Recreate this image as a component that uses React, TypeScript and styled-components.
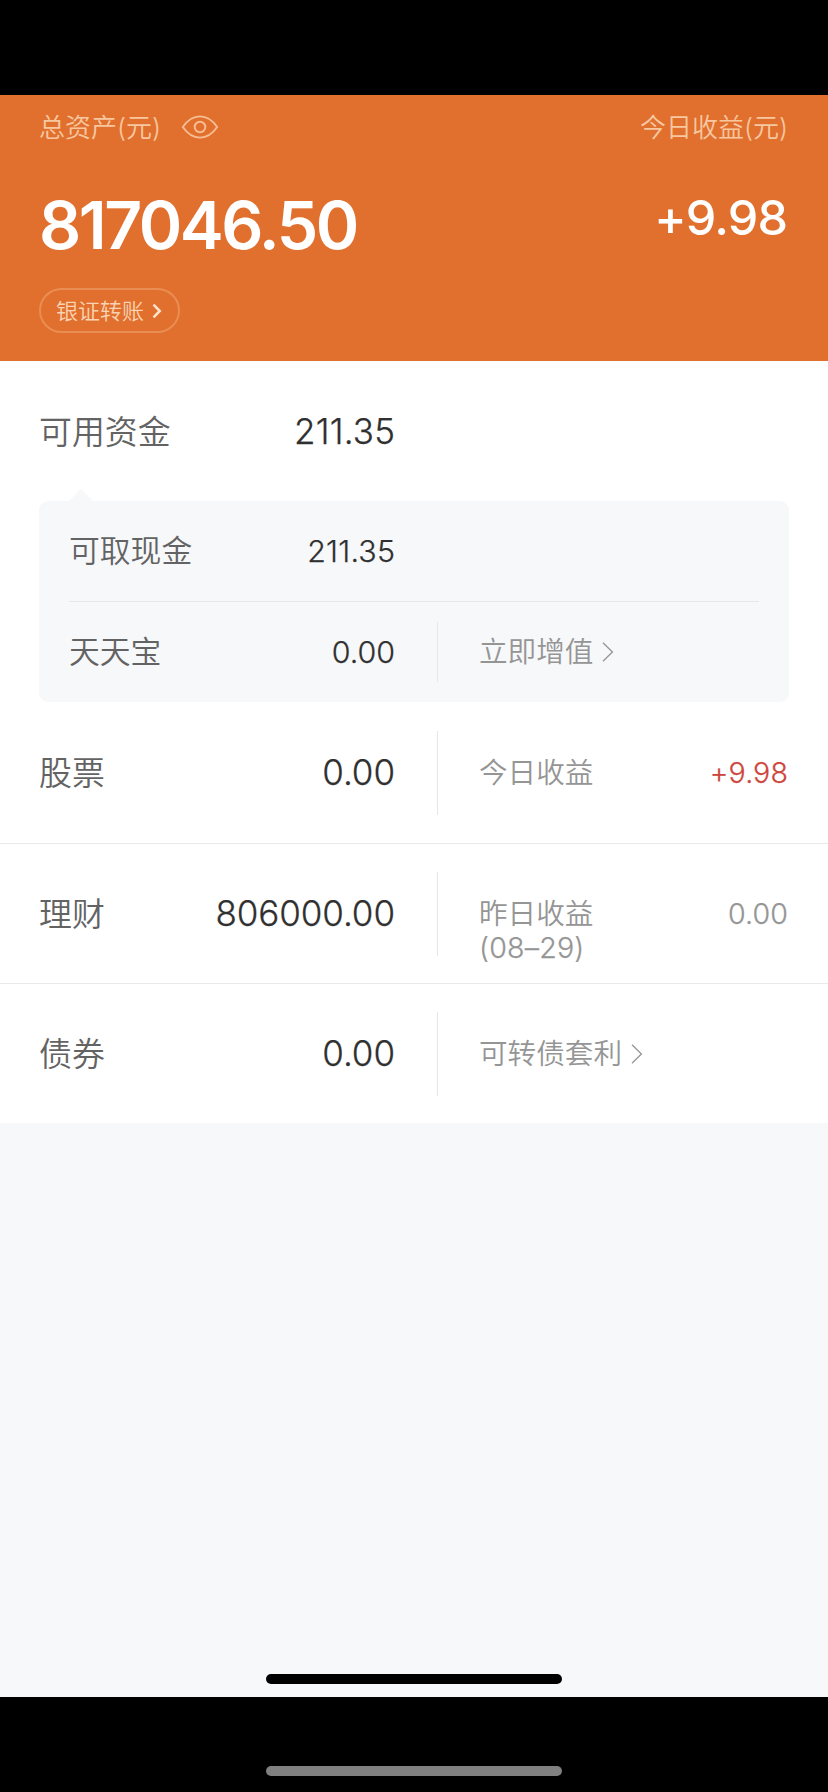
import React from "react";
import styled, { createGlobalStyle } from "styled-components";

const GlobalStyle = createGlobalStyle`
  * { box-sizing: border-box; }
  html, body { margin: 0; padding: 0; background: #000; }
  body {
    font-family: Inter, "Noto Sans CJK SC", sans-serif;
    font-weight: 400;
    font-feature-settings: "calt" 0;
  }
`;

const Screen = styled.div`
  width: 828px;
  height: 1792px;
  padding-top: 95px;
  background: #000;
  display: flex;
  flex-direction: column;
  overflow: hidden;
`;

const Page = styled.main`
  height: 1602px;
  background: #f7f8fa;
  display: flex;
  flex-direction: column;
`;

const Summary = styled.header`
  height: 266px;
  flex: none;
  padding: 13px 40px 0 39px;
  background: #e1702e;
  color: #fff;
  display: flex;
  justify-content: space-between;
`;

const SummaryColumn = styled.div<{ $end?: boolean }>`
  display: flex;
  flex-direction: column;
  align-items: ${(p) => (p.$end ? "flex-end" : "flex-start")};
`;

const Caption = styled.div`
  height: 40px;
  display: flex;
  align-items: center;
  gap: 20px;
  font-size: 26px;
  font-weight: 350;
  line-height: 40px;
  color: #f7c7a0;
  white-space: nowrap;
`;

const Figure = styled.div<{ $size: number; $top: number; $spacing: number; $weight: number }>`
  height: 80px;
  margin-top: ${(p) => p.$top}px;
  font-size: ${(p) => p.$size}px;
  font-weight: ${(p) => p.$weight};
  letter-spacing: ${(p) => p.$spacing}px;
  margin-right: ${(p) => -p.$spacing}px;
  line-height: 80px;
  white-space: nowrap;
`;

const TransferButton = styled.button`
  width: 141px;
  height: 45px;
  margin: 23px 0 0;
  padding: 0 16px 0 15px;
  border: 2px solid #ea8d53;
  border-radius: 23px;
  background: transparent;
  color: #fad3b3;
  font: inherit;
  font-size: 22px;
  font-weight: 350;
  line-height: 40px;
  display: flex;
  align-items: center;
  justify-content: space-between;
  white-space: nowrap;
`;

const Funds = styled.section`
  background: #fff;
  display: flex;
  flex-direction: column;
`;

const Row = styled.div<{ $height: number; $line?: boolean }>`
  height: ${(p) => p.$height}px;
  padding: 0 40px 0 39px;
  display: flex;
  align-items: center;
  border-bottom: ${(p) => (p.$line ? "1px solid #e9e9eb" : "none")};
`;

const Label = styled.div<{ $inset?: boolean }>`
  flex: 1;
  padding-top: ${(p) => (p.$inset ? 0 : 1)}px;
  font-size: ${(p) => (p.$inset ? 30.8 : 32.9)}px;
  line-height: 44px;
  font-weight: 350;
  color: #636363;
  white-space: nowrap;
`;

const Holding = styled.div<{ $inset?: boolean }>`
  width: ${(p) => (p.$inset ? 326 : 356)}px;
  flex: none;
  display: flex;
  align-items: center;
`;

const Amount = styled.div<{ $inset?: boolean; $spacing?: number }>`
  padding-bottom: 1px;
  font-size: ${(p) => (p.$inset ? 30.4 : 35)}px;
  font-weight: 350;
  letter-spacing: ${(p) => p.$spacing ?? 0}px;
  margin-right: ${(p) => -(p.$spacing ?? 0)}px;
  line-height: 44px;
  color: #303030;
  -webkit-text-stroke: 0.25px #303030;
`;

const Separator = styled.div<{ $height: number }>`
  width: 1px;
  height: ${(p) => p.$height}px;
  flex: none;
  margin: 0 41px 0 42px;
  background: #e6e7e9;
`;

const Detail = styled.div<{ $inset?: boolean }>`
  flex: 1;
  height: ${(p) => (p.$inset ? 34 : 35)}px;
  display: flex;
  justify-content: space-between;
  font-size: 28.6px;
  font-weight: 350;
  line-height: 36px;
  color: #959595;
  white-space: nowrap;
`;

const DetailLink = styled.div`
  display: flex;
  align-items: center;
  gap: 9px;
`;

const Change = styled.div<{ $up?: boolean }>`
  letter-spacing: 0.1px;
  color: ${(p) => (p.$up ? "#cd463c" : "#959595")};
  -webkit-text-stroke: 0.25px currentColor;
`;

const DateText = styled.div`
  line-height: 32px;
  letter-spacing: 0.2px;
  -webkit-text-stroke: 0.25px currentColor;
`;

const Breakdown = styled.div`
  position: relative;
  height: 201px;
  margin: 0 39px;
  padding: 0 30px;
  border-radius: 9px;
  background: #f7f8fa;
`;

const Pointer = styled.svg`
  position: absolute;
  left: 30px;
  top: -12px;
`;

const InsetRow = styled.div<{ $line?: boolean }>`
  height: ${(p) => (p.$line ? 101 : 100)}px;
  display: flex;
  align-items: center;
  border-bottom: ${(p) => (p.$line ? "1px solid #e6e7ea" : "none")};
`;

const HomeBar = styled.div<{ $tone: string; $top: string }>`
  width: 296px;
  height: 10px;
  flex: none;
  border-radius: 5px;
  margin: ${(p) => p.$top} auto 0;
  background: ${(p) => p.$tone};
`;

const EyeDrawing = styled.svg`
  margin-bottom: 2px;
`;

const EyeIcon = () => (
  <EyeDrawing width="38" height="26" viewBox="0 0 38 26" fill="none" stroke="#f6bd92" strokeWidth="1.9">
    <path d="M1.8 13C6.5 6.2 12 2.4 19 2.4S31.5 6.2 36.2 13C31.5 19.8 26 23.6 19 23.6S6.5 19.8 1.8 13Z" strokeLinejoin="round" />
    <circle cx="19" cy="13" r="5.3" />
  </EyeDrawing>
);

const BoldChevron = () => (
  <svg width="10" height="16" viewBox="0 0 10 16" fill="none" stroke="#fde3cd" strokeWidth="2.5">
    <path d="M1.5 1.6L7.8 8L1.5 14.4" />
  </svg>
);

const ThinChevron = () => (
  <svg width="12" height="20" viewBox="0 0 12 20" fill="none" stroke="#999" strokeWidth="1.4">
    <path d="M1 0.8L10.4 10L1 19.2" />
  </svg>
);

export default function App() {
  return (
    <Screen>
      <GlobalStyle />
      <Page>
        <Summary>
          <SummaryColumn>
            <Caption>
              <span>总资产(元)</span>
              <EyeIcon />
            </Caption>
            <Figure $size={66} $top={37} $spacing={-2.5} $weight={600}>817046.50</Figure>
            <TransferButton>
              <span>银证转账</span>
              <BoldChevron />
            </TransferButton>
          </SummaryColumn>
          <SummaryColumn $end>
            <Caption>今日收益(元)</Caption>
            <Figure $size={48.5} $top={30} $spacing={-0.8} $weight={500}>+9.98</Figure>
          </SummaryColumn>
        </Summary>

        <Funds>
          <Row $height={140}>
            <Holding>
              <Label>可用资金</Label>
              <Amount $spacing={0.2}>211.35</Amount>
            </Holding>
          </Row>

          <Breakdown>
            <Pointer width="24" height="12" viewBox="0 0 24 12" fill="#f7f8fa">
              <path d="M0 12L10.5 1.2Q12 -0.2 13.5 1.2L24 12Z" />
            </Pointer>
            <InsetRow $line>
              <Holding $inset>
                <Label $inset>可取现金</Label>
                <Amount $inset $spacing={0.2}>211.35</Amount>
              </Holding>
            </InsetRow>
            <InsetRow>
              <Holding $inset>
                <Label $inset>天天宝</Label>
                <Amount $inset>0.00</Amount>
              </Holding>
              <Separator $height={60} />
              <Detail $inset>
                <DetailLink>
                  <span>立即增值</span>
                  <ThinChevron />
                </DetailLink>
              </Detail>
            </InsetRow>
          </Breakdown>

          <Row $height={142} $line>
            <Holding>
              <Label>股票</Label>
              <Amount $spacing={-0.1}>0.00</Amount>
            </Holding>
            <Separator $height={84} />
            <Detail>
              <span>今日收益</span>
              <Change $up>+9.98</Change>
            </Detail>
          </Row>

          <Row $height={140} $line>
            <Holding>
              <Label>理财</Label>
              <Amount $spacing={-0.1}>806000.00</Amount>
            </Holding>
            <Separator $height={84} />
            <Detail>
              <div>
                <div>昨日收益</div>
                <DateText>(08–29)</DateText>
              </div>
              <Change>0.00</Change>
            </Detail>
          </Row>

          <Row $height={139}>
            <Holding>
              <Label>债券</Label>
              <Amount $spacing={-0.1}>0.00</Amount>
            </Holding>
            <Separator $height={84} />
            <Detail>
              <DetailLink>
                <span>可转债套利</span>
                <ThinChevron />
              </DetailLink>
            </Detail>
          </Row>
        </Funds>
        <HomeBar $tone="#000" $top="551px" />
      </Page>
      <HomeBar $tone="#808080" $top="69px" />
    </Screen>
  );
}
